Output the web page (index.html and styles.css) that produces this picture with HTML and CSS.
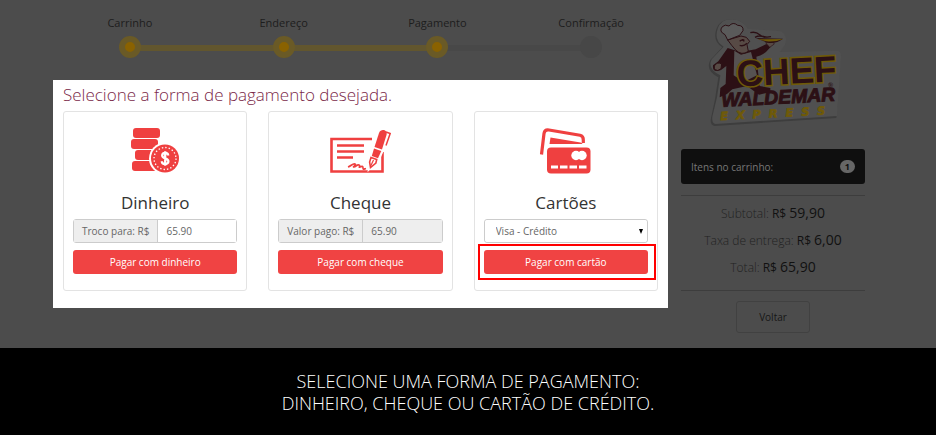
FILE: index.html
```html
<!doctype html>
<html lang="pt-BR">
<head>
	<meta charset="utf-8">
	<title>Chef Waldemar Express | Pagamento</title>
	<meta name="viewport" content="width=device-width, initial-scale=1">
	<link rel="stylesheet" href="styles.css">
</head>

<body>
	<div class="checkout">
		<main class="main">
			<ol class="steps">
				<li class="step done">Carrinho<i class="dot"></i></li>
				<li class="step done">Endereço<i class="dot"></i></li>
				<li class="step current">Pagamento<i class="dot"></i></li>
				<li class="step">Confirmação<i class="dot"></i></li>
			</ol>

			<section class="payment">
				<h1>Selecione a forma de pagamento desejada.</h1>
				<div class="cards">
					<form class="card">
						<svg class="card-icon" viewBox="0 0 48 48" fill="#ef4040">
							<rect x="2" y="1" width="27" height="10" rx="3"/>
							<rect x="0" y="12" width="27" height="10" rx="3"/>
							<rect x="4" y="23" width="24" height="10" rx="3"/>
							<rect x="1" y="34" width="26" height="10" rx="3"/>
							<circle cx="34" cy="31.500" r="16" fill="#fff"/>
							<circle cx="34" cy="31.500" r="14"/>
							<circle cx="34" cy="31.500" r="11" fill="none" stroke="#fff" stroke-width="1.300" stroke-dasharray="1.400 2.050"/>
							<path d="M37.200 28.500c-.2-3.600-6-3.300-6 0 0 3.400 6.200 2.400 6.200 5.900 0 3.600-6.500 3.600-6.600-.2M34.200 24.300v14.400" fill="none" stroke="#fff" stroke-width="2.300"/>
						</svg>
						<h2>Dinheiro</h2>
						<div class="field">
							<label for="troco">Troco para: R$</label>
							<input type="text" id="troco" value="65.90">
						</div>
						<button type="button" class="btn-pay">Pagar com dinheiro</button>
					</form>

					<form class="card">
						<svg class="card-icon wide" viewBox="0 0 62 48" fill="none" stroke="#ef4040">
							<path d="M43 12H2.500V44.500H53.500V25" stroke-width="2.600"/>
							<path d="M8 18.500H35M8 24.500H35M8 30.500H24" stroke-width="2.300"/>
							<path d="M19 40c3-1 5-4 7-3s-3 3-1 3 3-3 5-2-1 3 1 2 3-1 3 1 1 1 3 .5" stroke-width="1.700"/>
							<path d="M52 1.500L42 26.500 40.500 41 50 31 61 6z" fill="#fff" stroke="#fff" stroke-width="3"/>
							<path d="M50 6c2-5 9-3 7.500 2L53 22.500 45.500 20z" fill="#ef4040" stroke="none"/>
							<path d="M45 21.500L52.300 24 49 31.200 42.800 29z" fill="#ef4040" stroke="none"/>
							<path d="M57 5l4.200 1.500-4.200 12" stroke-width="1.500"/>
							<path d="M42 30.500l5.700 2-.8 3.500-5.400 4.500-.9-5.500z" stroke-width="1.600"/>
							<path d="M44.500 33l-2.800 6" stroke-width="1.200"/>
						</svg>
						<h2>Cheque</h2>
						<div class="field">
							<label for="valor">Valor pago: R$</label>
							<input type="text" id="valor" value="65.90" readonly>
						</div>
						<button type="button" class="btn-pay">Pagar com cheque</button>
					</form>

					<form class="card">
						<svg class="card-icon wide" viewBox="2 0 62 48" fill="#ef4040">
							<path d="M8.500 27.500L11 6.500Q11.700 2.300 16 3L47 8.200Q50.500 9 50.300 13V16" fill="none" stroke="#ef4040" stroke-width="3.200"/>
							<path d="M17.500 10.500l30 5q2 .5 2 1.500H16.500z"/>
							<rect x="14" y="20.500" width="43.500" height="26" rx="4"/>
							<g fill="#fff">
								<circle cx="43" cy="28.500" r="4.700"/>
								<circle cx="49" cy="28.500" r="4.700"/>
								<path d="M18 38.500h7v3h-7zM27 38.500h7.500v3H27zM36.500 38.500H44v3h-7.500zM46 38.500h7.500v3H46z"/>
							</g>
						</svg>
						<h2>Cartões</h2>
						<div class="field select">
							<select aria-label="Cartão">
								<option>Visa - Crédito</option>
							</select>
						</div>
						<button type="button" class="btn-pay highlight">Pagar com cartão</button>
					</form>
				</div>
			</section>
		</main>

		<aside class="sidebar">
			<svg class="logo" viewBox="8 -6 480 360" role="img" aria-label="Chef Waldemar Express">
				<!-- cut-out backing -->
				<path d="M78 52Q88 20 128 22 156 24 170 52L270 60Q292 72 280 98L262 124 440 120Q452 122 450 140L438 318 72 342Q58 338 62 318L74 262 84 196Q44 176 60 144L96 106Q66 86 78 52z" fill="#3d3d3d"/>
				<path d="M82 50Q92 20 128 22 156 24 172 50L272 58Q294 72 284 98L268 120 440 116Q454 118 452 136L440 312 76 336Q64 334 66 314L80 256 90 190Q50 172 64 142L100 104Q70 86 82 50z" fill="#505050"/>
				<!-- chef -->
				<path d="M112 108L150 120 196 112 228 96 240 106Q222 130 198 134L208 222 240 228 240 240 206 248 170 222 126 232 110 246 88 256 90 228 106 216 108 162 92 174Q66 184 68 160L84 148z" fill="#2c1015"/>
				<path d="M132 116l20 12 30-8 18 70-40 20-30-20z" fill="#565252"/>
				<path d="M112 84l40-12 16 4 10 12-8 10 4 20q-20 14-38-4l-12-14z" fill="#574a45" stroke="#2c1015" stroke-width="3"/>
				<path d="M112 84L104 68Q84 58 96 44 104 36 116 42 128 28 142 40 160 40 158 56L148 70z" fill="#5a5a5a" stroke="#2c1015" stroke-width="3"/>
				<path d="M148 88q8-8 14 0M148 100q12 4 22-6M156 84h6" fill="none" stroke="#2c1015" stroke-width="4"/>
				<path d="M72 162q8-14 22-6l-2 14q-10 10-20 2z" fill="#574a45" stroke="#2c1015" stroke-width="3"/>
				<path d="M226 92l18-6 8 10-14 10z" fill="#574a45" stroke="#2c1015" stroke-width="2"/>
				<path d="M196 78l82 2q-20 16-46 12z" fill="#2c1015"/>
				<path d="M202 82l76-1q-24 10-50 7z" fill="#6f5a08"/>
				<path d="M180 62q16-4 28 6t34 6M194 76q14-8 30 0" fill="none" stroke="#2c1015" stroke-width="4"/>
				<!-- lettering -->
				<g transform="rotate(-3 290 200)">
					<text class="logo-chef" x="140" y="216">CHEF</text>
					<text class="logo-mark" x="412" y="232">®</text>
					<text class="logo-name" x="90" y="274">WALDEMAR</text>
					<text class="logo-express" x="84" y="314">EXPRESS</text>
				</g>
			</svg>

			<a href="#" class="cart">Itens no carrinho: <span class="badge">1</span></a>

			<div class="totals">
				<p>Subtotal: <b>R$ <em>59,90</em></b></p>
				<p>Taxa de entrega: <b>R$ <em>6,00</em></b></p>
				<p>Total: <b>R$ <em>65,90</em></b></p>
			</div>

			<button type="button" class="btn-back">Voltar</button>
		</aside>
	</div>

	<footer class="caption">
		<p>Selecione uma forma de pagamento:<br>dinheiro, cheque ou cartão de crédito.</p>
	</footer>
</body>
</html>
```
FILE: styles.css
```css
* {
	box-sizing: border-box;
}
body, h1, h2, p, ol, li {
	padding: 0;
	margin: 0;
}
body {
	min-height: 100vh;
	display: flex;
	flex-direction: column;
	font-family: "Open Sans", "Noto Sans", sans-serif;
	font-size: 12px;
	color: #222;
	background: #000;
}
button, input, select {
	font-family: inherit;
	font-size: 10px;
}

.checkout {
	display: grid;
	grid-template-columns: minmax(0, 1fr) 184px;
	align-items: start;
	gap: 13px;
	padding: 10px 71px 15px 53px;
	background: #4c4c4c;
}

/* steps */
.steps {
	display: grid;
	grid-template-columns: repeat(4, 1fr);
	list-style: none;
	height: 70px;
	padding-top: 4px;
}
.step {
	position: relative;
	text-align: center;
	font-size: 11px;
	line-height: 18px;
	color: #1d1d1d;
}
.dot {
	position: relative;
	z-index: 1;
	display: block;
	width: 22px;
	height: 22px;
	margin: 4px auto 0;
	border-radius: 50%;
	background: #474747;
}
.done .dot, .current .dot {
	border: 6px solid #6a5a26;
	background: #8a6200;
}
.step:not(:last-child)::after {
	content: '';
	position: absolute;
	left: 50%;
	top: 31px;
	width: 100%;
	height: 6px;
	background: #484848;
}
.step.done::after {
	background: #62562e;
}

/* payment */
.payment {
	padding: 4px 10px 17px;
	background: #fff;
}
.payment h1 {
	font-size: 17px;
	font-weight: 300;
	line-height: 22px;
	margin-bottom: 5px;
	color: #7a2848;
}
.cards {
	display: grid;
	grid-template-columns: repeat(3, minmax(0, 1fr));
	gap: 21px;
}
.card {
	display: flex;
	flex-direction: column;
	padding: 15px 9px 16px;
	border: 1px solid #e3e3e3;
	border-radius: 3px;
}
.card-icon {
	width: 48px;
	height: 48px;
	margin: 0 auto;
}
.card-icon.wide {
	width: 62px;
}
.card h2 {
	font-size: 17px;
	font-weight: 400;
	line-height: 24px;
	margin: 16px 0 4px;
	text-align: center;
	color: #333;
}
.field {
	position: relative;
	display: flex;
	height: 24px;
	margin-bottom: 7px;
	border: 1px solid #ccc;
	border-radius: 3px;
	color: #666;
}
.field label {
	padding: 0 8px;
	font-size: 10px;
	line-height: 22px;
	white-space: nowrap;
	border-right: 1px solid #ccc;
	background: #eee;
}
.field input, .field select {
	flex: 1;
	min-width: 0;
	padding: 0 8px;
	border: 0;
	color: #666;
	background: #fff;
}
.field input[readonly] {
	background: #eee;
}
.field select {
	appearance: none;
	padding: 0 11px;
	border-radius: 3px;
}
.select::after {
	content: '';
	position: absolute;
	right: 4px;
	top: 9px;
	border: 2px solid transparent;
	border-top: 5px solid #000;
	border-bottom: 0;
	pointer-events: none;
}
.btn-pay {
	position: relative;
	height: 24px;
	padding: 0;
	border: 0;
	border-radius: 3px;
	color: #fff;
	background: #f04343;
}
.highlight::after {
	content: '';
	position: absolute;
	top: -6px;
	right: -8px;
	bottom: -6px;
	left: -6px;
	border: 2px solid #f00;
}

/* sidebar */
.sidebar {
	display: flex;
	flex-direction: column;
	align-items: center;
}
.logo {
	width: 160px;
	height: 120px;
}
.logo text {
	font-family: "Liberation Sans", Arial, sans-serif;
	font-weight: bold;
}
.logo .logo-chef {
	font-size: 110px;
	fill: #2c1015;
	stroke: #6f5a08;
	stroke-width: 9px;
	paint-order: stroke;
}
.logo .logo-mark {
	font-size: 20px;
	fill: #2c1015;
}
.logo .logo-name {
	font-size: 58px;
	font-style: italic;
	fill: #2c1015;
	stroke: #2c1015;
	stroke-width: 3px;
}
.logo .logo-express {
	font-family: "DejaVu Sans", sans-serif;
	font-size: 34px;
	font-style: italic;
	letter-spacing: 24px;
	fill: #6f5a08;
	stroke: #6f5a08;
	stroke-width: 2px;
}
.cart {
	display: flex;
	align-items: center;
	justify-content: space-between;
	align-self: stretch;
	height: 35px;
	margin: 19px 0 11px;
	padding: 0 10px;
	border-radius: 3px;
	font-size: 10px;
	text-decoration: none;
	color: #777;
	background: #0f0f0f;
}
.badge {
	padding: 0 5px;
	border-radius: 7px;
	font-size: 9px;
	font-weight: 700;
	line-height: 13px;
	color: #0f0f0f;
	background: #666;
}
.totals {
	align-self: stretch;
	padding: 4px 0 9px;
	border-top: 1px solid #3d3d3d;
	border-bottom: 1px solid #3d3d3d;
	text-align: center;
	font-weight: 300;
	line-height: 26px;
}
.totals b {
	font-weight: 400;
	color: #111;
}
.totals em {
	font-size: 14px;
	font-style: normal;
}
.btn-back {
	width: 74px;
	height: 32px;
	margin-top: 10px;
	border: 1px solid #414141;
	border-radius: 3px;
	color: #171717;
	background: transparent;
}

/* caption */
.caption {
	flex: 1;
	display: flex;
	align-items: center;
	justify-content: center;
	text-align: center;
	text-transform: uppercase;
	font-size: 18px;
	font-weight: 300;
	line-height: 22px;
	color: #fff;
	background: #000;
}
```
